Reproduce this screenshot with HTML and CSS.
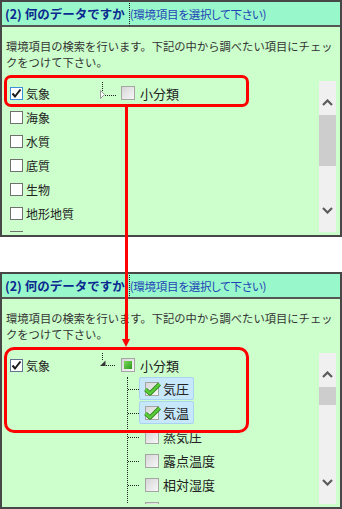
FILE: index.html
```html
<!DOCTYPE html>
<html>
<head>
    <meta charset="utf-8">
    <title>環境項目の選択</title>
    <link rel="stylesheet" href="styles.css">
</head>
<body>
<div class="page">

    <!-- before: tree collapsed -->
    <section class="panel">
        <h2 class="panel-head"><span class="num">(2) 何のデータですか</span><span class="sub">(環境項目を選択して下さい)</span></h2>
        <div class="panel-body">
            <p class="intro">環境項目の検索を行います。下記の中から調べたい項目にチェックをつけて下さい。</p>
            <div class="listbox">
                <div class="cols">
                    <ul class="cats">
                        <li><svg class="cb" width="13" height="13" viewBox="0 0 13 13"><rect x="0.5" y="0.5" width="12" height="12" fill="#fff" stroke="#3c8fd8"/><path d="M2.5 6.5L5 9.5L10.5 2.5" fill="none" stroke="#1a1a1a" stroke-width="2"/></svg>気象</li>
                        <li><span class="box"></span>海象</li>
                        <li><span class="box"></span>水質</li>
                        <li><span class="box"></span>底質</li>
                        <li><span class="box"></span>生物</li>
                        <li><span class="box"></span>地形地質</li>
                        <li><span class="box"></span></li>
                    </ul>
                    <div class="tree">
                        <div class="tree-row">
                            <svg class="conn" width="16" height="24" viewBox="0 0 16 24">
                                <path d="M2.5 1V10" stroke="#222" stroke-dasharray="1 1"/>
                                <path d="M0.5 9.5L4.5 13.5L0.5 17.5Z" fill="#fff" stroke="#9a9a9a"/>
                                <path d="M5 14.5H16" stroke="#222" stroke-dasharray="1 1"/>
                            </svg>
                            <span class="tcb"></span>小分類
                        </div>
                    </div>
                </div>
                <div class="scrollbar">
                    <div class="sb-up"><svg width="11" height="7" viewBox="0 0 11 7"><path d="M1 6L5.5 1.5L10 6" fill="none" stroke="#5b5b5b" stroke-width="2.2"/></svg></div>
                    <div class="thumb thumb-long"></div>
                    <div class="sb-track"></div>
                    <div class="sb-down"><svg width="11" height="7" viewBox="0 0 11 7"><path d="M1 1L5.5 5.5L10 1" fill="none" stroke="#5b5b5b" stroke-width="2.2"/></svg></div>
                </div>
            </div>
        </div>
    </section>

    <!-- after: tree expanded, 気圧 and 気温 checked -->
    <section class="panel">
        <h2 class="panel-head"><span class="num">(2) 何のデータですか</span><span class="sub">(環境項目を選択して下さい)</span></h2>
        <div class="panel-body">
            <p class="intro">環境項目の検索を行います。下記の中から調べたい項目にチェックをつけて下さい。</p>
            <div class="listbox">
                <div class="cols">
                    <ul class="cats">
                        <li><svg class="cb" width="13" height="13" viewBox="0 0 13 13"><rect x="0.5" y="0.5" width="12" height="12" fill="#fff" stroke="#5f7590"/><path d="M2.5 6.5L5 9.5L10.5 2.5" fill="none" stroke="#1a1a1a" stroke-width="2"/></svg>気象</li>
                    </ul>
                    <div class="tree">
                        <div class="tree-row">
                            <svg class="conn" width="16" height="24" viewBox="0 0 16 24">
                                <path d="M2.5 0V8" stroke="#222" stroke-dasharray="1 1"/>
                                <path d="M5.5 7.5V13H0Z" fill="#333"/>
                                <path d="M6 12.5H16" stroke="#222" stroke-dasharray="1 1"/>
                            </svg>
                            <span class="tcb"><span class="part"></span></span>小分類
                        </div>
                        <ul class="sub">
                            <li><span class="node on"><span class="tcb"><svg class="tick" width="17" height="14" viewBox="0 0 17 14"><path d="M1.5 7.5L6 11.5L15.5 2" fill="none" stroke="#2f8a1c" stroke-width="4.2" stroke-linejoin="round"/><path d="M1.5 7.5L6 11.5L15.5 2" fill="none" stroke="#5ccc3a" stroke-width="2.4" stroke-linejoin="round"/></svg></span>気圧</span></li>
                            <li><span class="node on"><span class="tcb"><svg class="tick" width="17" height="14" viewBox="0 0 17 14"><path d="M1.5 7.5L6 11.5L15.5 2" fill="none" stroke="#2f8a1c" stroke-width="4.2" stroke-linejoin="round"/><path d="M1.5 7.5L6 11.5L15.5 2" fill="none" stroke="#5ccc3a" stroke-width="2.4" stroke-linejoin="round"/></svg></span>気温</span></li>
                            <li><span class="node"><span class="tcb"></span>蒸気圧</span></li>
                            <li><span class="node"><span class="tcb"></span>露点温度</span></li>
                            <li><span class="node"><span class="tcb"></span>相対湿度</span></li>
                            <li><span class="node"><span class="tcb"></span></span></li>
                        </ul>
                    </div>
                </div>
                <div class="scrollbar">
                    <div class="sb-up"><svg width="11" height="7" viewBox="0 0 11 7"><path d="M1 6L5.5 1.5L10 6" fill="none" stroke="#5b5b5b" stroke-width="2.2"/></svg></div>
                    <div class="thumb thumb-short"></div>
                    <div class="sb-track"></div>
                    <div class="sb-down"><svg width="11" height="7" viewBox="0 0 11 7"><path d="M1 1L5.5 5.5L10 1" fill="none" stroke="#5b5b5b" stroke-width="2.2"/></svg></div>
                </div>
            </div>
        </div>
    </section>

    <!-- red annotation -->
    <div class="mark mark-a"></div>
    <div class="mark mark-b"></div>
    <div class="arrow-line"></div>
    <div class="arrow-head"></div>
</div>
</body>
</html>
```

FILE: styles.css
```css
body {
    margin: 0;
    background-color: #fff;
    font-family: "Noto Sans CJK JP", "Noto Sans", sans-serif;
    color: #222;
}

.page {
    position: relative;
    width: 342px;
}

.panel {
    box-sizing: border-box;
    height: 237px;
    border: 2px solid #474747;
    background-color: #ccffcc;
    overflow: hidden;
}

.panel + .panel {
    margin-top: 35px;
}

.panel-head {
    display: flex;
    align-items: baseline;
    height: 23px;
    margin: 0;
    padding-left: 3px;
    background-color: #99f7cc;
    border-bottom: 2px solid #555;
    line-height: 23px;
    white-space: nowrap;
}

.panel-head .num {
    font-size: 12.5px;
    font-weight: bold;
    color: #0b2a8f;
}

.panel-head .sub {
    margin-left: 4px;
    font-size: 11.5px;
    font-weight: normal;
    letter-spacing: -0.25px;
    color: #1f45b5;
    font-feature-settings: "palt";
}

.panel-body {
    padding: 11px 4px 0;
}

.intro {
    margin: 0 0 11px;
    font-size: 11.3px;
    line-height: 16px;
    color: #333;
}

.listbox {
    display: flex;
    height: 151px;
    overflow: hidden;
}

.cols {
    flex: 1;
    display: flex;
    align-items: flex-start;
}

/* left column */
.cats {
    list-style: none;
    width: 94px;
    margin: 0;
    padding: 0;
    flex: none;
}

.cats li {
    display: flex;
    align-items: center;
    height: 24px;
    padding-left: 4px;
    font-size: 12px;
}

.cb,
.box {
    flex: none;
    margin-right: 3px;
}

.box {
    box-sizing: border-box;
    width: 13px;
    height: 13px;
    border: 1px solid #707070;
    background-color: #fff;
}

/* tree */
.tree {
    flex: 1;
    font-size: 13px;
}

.tree-row {
    display: flex;
    align-items: center;
    height: 24px;
}

.conn {
    flex: none;
    margin-right: 5px;
}

.tcb {
    position: relative;
    box-sizing: border-box;
    display: flex;
    align-items: center;
    justify-content: center;
    flex: none;
    width: 14px;
    height: 14px;
    margin-right: 5px;
    border: 1px solid #a5a5a5;
    background: linear-gradient(135deg, #d6d6d6, #f7f7f7);
}

.part {
    width: 8px;
    height: 8px;
    background: linear-gradient(135deg, #7ad85a, #2d9a1c);
}

.tick {
    position: absolute;
    left: -2px;
    top: -1px;
}

.sub {
    list-style: none;
    margin: 0 0 0 27px;
    padding: 0;
    border-left: 1px dotted #222;
}

.sub li {
    display: flex;
    align-items: flex-start;
    height: 24px;
}

.sub li::before {
    content: "";
    flex: none;
    width: 11px;
    margin-top: 12px;
    border-top: 1px dotted #222;
}

.node {
    box-sizing: border-box;
    display: flex;
    align-items: center;
    height: 23px;
    padding: 0 4px 0 5px;
    border: 1px solid transparent;
    border-radius: 2px;
}

.node.on {
    background-color: #c7e7fb;
    border-color: #a9d3ee;
}

.node .tcb {
    margin-right: 4px;
}

/* fake scrollbar */
.scrollbar {
    display: flex;
    flex-direction: column;
    width: 17px;
    flex: none;
    background-color: #f0f0f0;
}

.sb-up,
.sb-down {
    box-sizing: border-box;
    display: flex;
    justify-content: center;
    align-items: flex-start;
    height: 34px;
}

.sb-up {
    padding-top: 18px;
}

.sb-down {
    padding-top: 9px;
}

.thumb {
    background-color: #cdcdcd;
}

.thumb-long {
    height: 51px;
}

.thumb-short {
    height: 18px;
}

.sb-track {
    flex: 1;
}

/* red annotation */
.mark {
    position: absolute;
    left: 4px;
    width: 245px;
    box-sizing: border-box;
    border: 3px solid #f00;
}

.mark-a {
    top: 75px;
    height: 32px;
    border-radius: 7px;
}

.mark-b {
    top: 347px;
    height: 86px;
    border-radius: 10px;
}

.arrow-line {
    position: absolute;
    left: 125px;
    top: 107px;
    width: 3px;
    height: 233px;
    background-color: #f00;
}

.arrow-head {
    position: absolute;
    left: 122px;
    top: 339px;
    width: 0;
    height: 0;
    border-left: 4.5px solid transparent;
    border-right: 4.5px solid transparent;
    border-top: 8px solid #f00;
}
```
